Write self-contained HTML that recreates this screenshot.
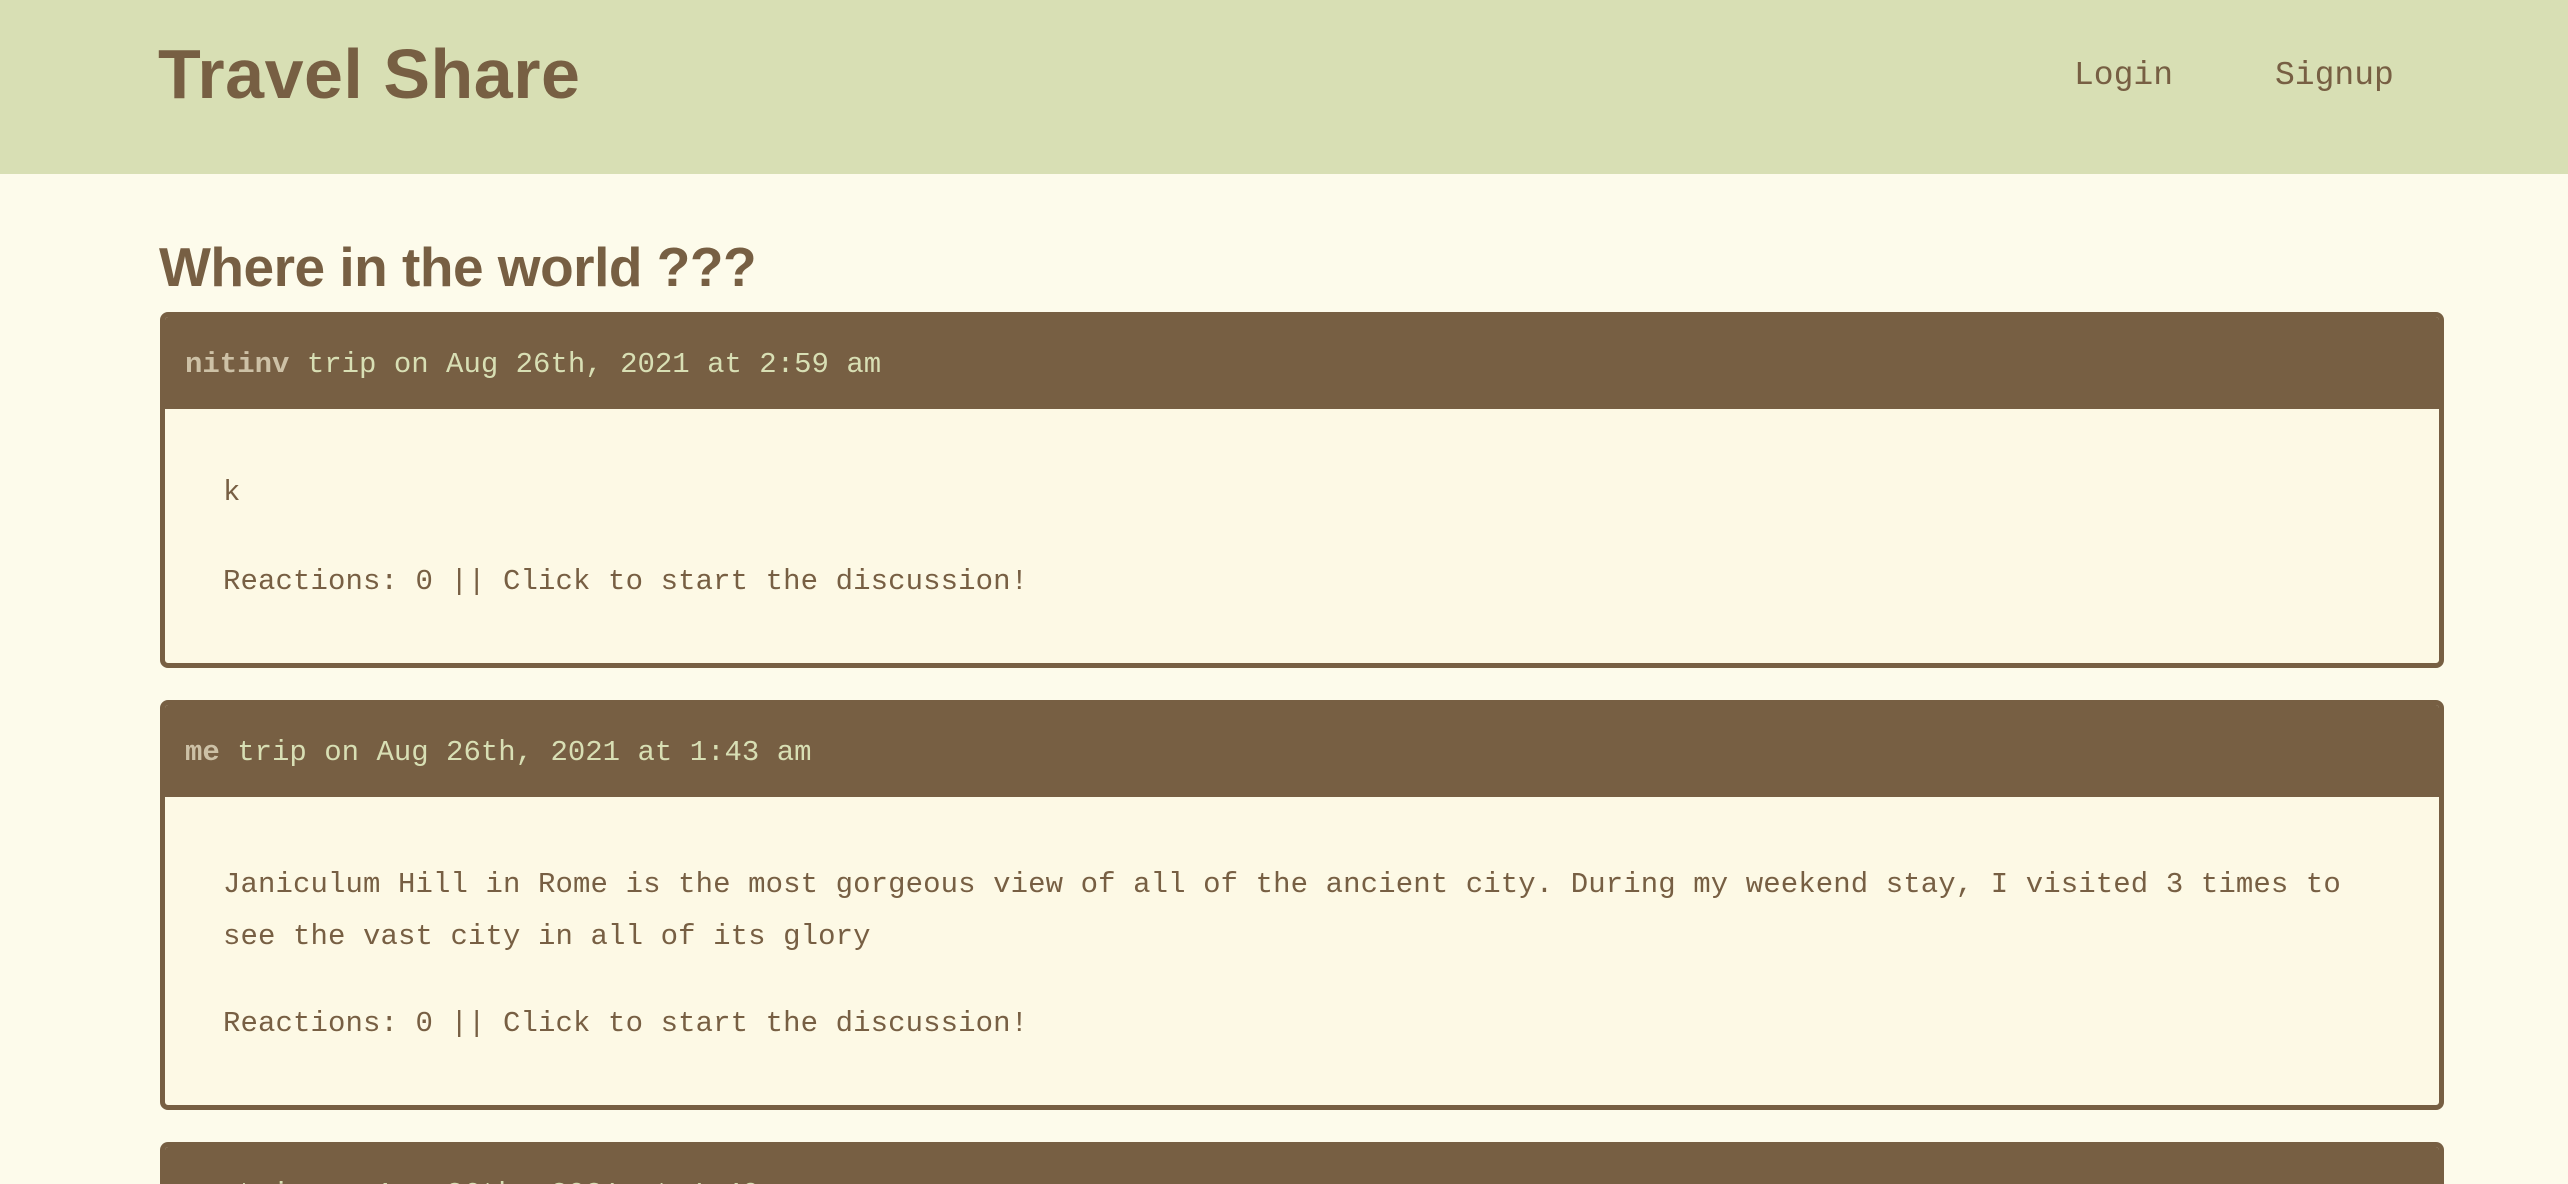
<!DOCTYPE html>
<html><head><meta charset="utf-8"><style>
*{margin:0;padding:0;box-sizing:border-box}
html,body{width:2568px;height:1184px;overflow:hidden;background:#fdfbeb;position:relative}
.hdr{position:absolute;left:0;top:0;width:2568px;height:174px;background:#d8dfb4}
.logo{position:absolute;left:158px;top:30px;font:bold 70px/88px "Liberation Sans",sans-serif;color:#775f43;letter-spacing:0.5px}
.nav{position:absolute;top:54px;font:33px/44px "Liberation Mono",monospace;color:#775f43}
h1{position:absolute;left:159px;top:232px;font:bold 55px/70px "Liberation Sans",sans-serif;color:#775f43;letter-spacing:-0.5px}
.card{position:absolute;left:160px;width:2284px;border:5px solid #775f43;border-radius:8px;background:#fdf9e5;overflow:hidden}
.ch{background:#775f43;height:92px;padding-left:20px;font:29px/96px "Liberation Mono",monospace;color:#d8dfb4;white-space:nowrap}
.ch b{color:#cdc1a6}
.tx{position:absolute;left:58px;font:29px/52px "Liberation Mono",monospace;color:#775f43;white-space:pre;letter-spacing:0.1px}
</style></head><body>
<div class="hdr">
<div class="logo">Travel Share</div>
<div class="nav" style="left:2074px">Login</div>
<div class="nav" style="left:2275px">Signup</div>
</div>
<h1>Where in the world ???</h1>
<div class="card" style="top:312px;height:356px">
<div class="ch"><b>nitinv</b> trip on Aug 26th, 2021 at 2:59 am</div>
<div class="tx" style="top:150px">k</div>
<div class="tx" style="top:239px">Reactions: 0 || Click to start the discussion!</div>
</div>
<div class="card" style="top:700px;height:410px">
<div class="ch"><b>me</b> trip on Aug 26th, 2021 at 1:43 am</div>
<div class="tx" style="top:154px">Janiculum Hill in Rome is the most gorgeous view of all of the ancient city. During my weekend stay, I visited 3 times to
see the vast city in all of its glory</div>
<div class="tx" style="top:293px">Reactions: 0 || Click to start the discussion!</div>
</div>
<div class="card" style="top:1142px;height:42px;border-bottom:none;border-radius:8px 8px 0 0">
<div class="ch"><b>me</b> trip on Aug 26th, 2021 at 1:40 am</div>
</div>
</body></html>
